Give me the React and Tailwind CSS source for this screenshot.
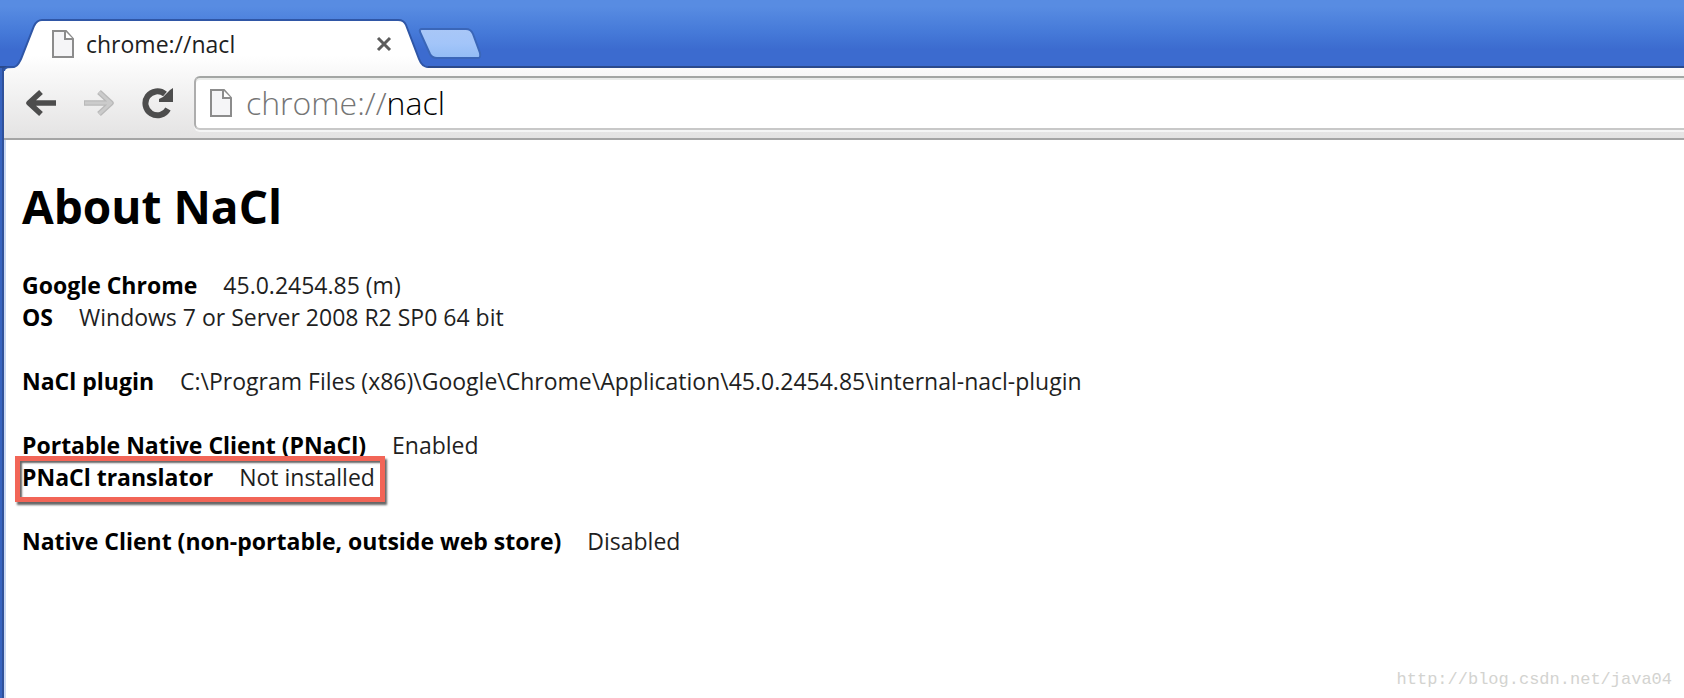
import React from "react";

function PageIcon({ className }) {
  return (
    <svg className={className} width="22" height="30" viewBox="0 0 22 30" fill="none" aria-hidden="true">
      <path d="M1 2H14L21 10V28H1Z" fill="#f5f5f7" stroke="#8c8c8c" strokeWidth="2" />
      <path d="M13 2V10H21" fill="#fff" stroke="#8c8c8c" strokeWidth="2" />
    </svg>
  );
}

function Tab() {
  return (
    <div className="relative flex h-[52px] w-[426px] items-center pt-1 pr-[34px] pl-[52px]">
      <svg className="absolute inset-0 overflow-visible" width="426" height="52" viewBox="0 0 426 52" aria-hidden="true">
        <defs>
          <linearGradient id="tab-fill" x1="0" y1="0" x2="0" y2="1">
            <stop offset="0" stopColor="#ffffff" />
            <stop offset="0.7" stopColor="#ffffff" />
            <stop offset="1" stopColor="#f9f9f9" />
          </linearGradient>
        </defs>
        <path
          d="M4 54V55C4 51 8 51 14 51C18 50 19 47 21 43L34 10Q37 4 42 4H398Q404 4 406 9L419 43Q422 51 428 52V54Z"
          fill="url(#tab-fill)"
        />
        <path
          d="M4 55C4 51 8 51 14 51C18 50 19 47 21 43L34 10Q37 4 42 4H398Q404 4 406 9L419 43Q422 51 428 51"
          fill="none"
          stroke="#2f56a6"
          strokeWidth="2"
        />
      </svg>
      <PageIcon className="relative shrink-0" />
      <span className="relative ml-3 flex-1 text-[23px] leading-8 text-[#1f1f1f]">chrome://nacl</span>
      <button type="button" aria-label="Close tab" className="relative flex size-4 items-center justify-center">
        <svg width="16" height="16" viewBox="0 0 16 16" fill="none" aria-hidden="true">
          <path d="M2 2L14 14M14 2L2 14" stroke="#5c5c5c" strokeWidth="3" />
        </svg>
      </button>
    </div>
  );
}

function TabStrip() {
  return (
    <header className="flex h-[68px] items-end border-b-2 border-[#2b4a8c] bg-linear-to-b from-[#588ce2] from-10% via-[#4579d8] via-50% to-[#3c6bcf] to-75%">
      <div className="-mb-0.5">
        <Tab />
      </div>
      <button type="button" aria-label="New tab" className="mb-1.5 -ml-2">
        <svg width="64" height="32" viewBox="0 0 64 32" aria-hidden="true">
          <defs>
            <linearGradient id="new-tab-fill" x1="0" y1="0" x2="0" y2="1">
              <stop offset="0" stopColor="#a9c7f7" />
              <stop offset="0.5" stopColor="#a3c5f9" />
              <stop offset="1" stopColor="#92bcf5" />
            </linearGradient>
          </defs>
          <path
            d="M4 1H48Q53 1 55 6L62 25Q63 30 60 30H19Q14 30 12 26L2 4Q1 1 4 1Z"
            fill="url(#new-tab-fill)"
            stroke="#3a66b8"
            strokeWidth="2"
          />
        </svg>
      </button>
    </header>
  );
}

function Toolbar() {
  return (
    <div className="flex h-[72px] items-start border-b-2 border-[#a5a5a5] bg-linear-to-b from-[#fafafa] to-[#e4e3e3] pl-5">
      <button type="button" aria-label="Back" className="mt-5 size-8">
        <svg width="32" height="32" viewBox="0 0 32 32" fill="none" aria-hidden="true">
          <path d="M17 4L5 15L17 26M5 15H32" stroke="#4d4d4d" strokeWidth="5.5" strokeLinejoin="round" />
        </svg>
      </button>
      <button type="button" aria-label="Forward" disabled className="mt-5 ml-7 size-8">
        <svg width="32" height="32" viewBox="0 0 32 32" fill="none" aria-hidden="true">
          <path d="M15 4L27 15L15 26M27 15H0" stroke="#b9b9b9" strokeWidth="5.5" strokeLinejoin="round" />
          <path d="M15 4L27 15L15 26M27 15H1" stroke="#cbcbcb" strokeWidth="3" strokeLinejoin="round" />
        </svg>
      </button>
      <button type="button" aria-label="Reload" className="mt-5 ml-[26px] size-8">
        <svg width="32" height="32" viewBox="0 0 32 32" fill="none" aria-hidden="true">
          <path d="M26 21A12 12 0 1 1 23 6" stroke="#4d4d4d" strokeWidth="6" />
          <path d="M31 0V14H17V11L21 9L28 2Z" fill="#4d4d4d" />
        </svg>
      </button>
      <div className="mt-2 ml-5 flex h-[54px] flex-1 items-center rounded-l-md border-2 border-r-0 border-t-[#a3a6a4] border-b-[#c8c8c8] border-l-[#adadad] bg-white pl-3.5 text-[32px] leading-10 font-light shadow-[inset_0_2px_0_#e9ebe9,0_2px_0_#f5f5f5]">
        <PageIcon className="shrink-0" />
        <label htmlFor="address" className="ml-3.5 text-[#757575]">
          chrome://
        </label>
        <input id="address" type="text" defaultValue="nacl" className="h-10 min-w-0 flex-1 bg-transparent text-black outline-none" />
      </div>
    </div>
  );
}

function Entry({ name, value }) {
  return (
    <div className="flex gap-[26px]">
      <dt className="font-bold text-black">{name}</dt>
      <dd>{value}</dd>
    </div>
  );
}

export default function App() {
  return (
    <div className="relative flex min-h-screen flex-col overflow-hidden bg-white font-['Open_Sans','Noto_Sans',sans-serif]">
      <TabStrip />
      <div className="flex flex-1 border-l-2 border-[#3763bf]">
        <div className="flex min-w-0 flex-1 flex-col border-l-2 border-[#2f519b]">
          <Toolbar />
          <main className="flex-1 border-l-2 border-[#c9d8f3] pt-[34px] pl-4 text-[#1f1f1f]">
            <h1 className="text-[46px] leading-[64px] font-bold text-black">About NaCl</h1>
            <dl className="mt-[31px] flex flex-col text-[23px] leading-8">
              <Entry name="Google Chrome" value="45.0.2454.85 (m)" />
              <Entry name="OS" value="Windows 7 or Server 2008 R2 SP0 64 bit" />
              <div className="mt-8">
                <Entry name="NaCl plugin" value="C:\Program Files (x86)\Google\Chrome\Application\45.0.2454.85\internal-nacl-plugin" />
              </div>
              <div className="mt-8">
                <Entry name="Portable Native Client (PNaCl)" value="Enabled" />
                <div className="relative">
                  <Entry name="PNaCl translator" value="Not installed" />
                  <div className="absolute -top-[5px] -left-[7px] h-[46px] w-[370px] border-[5px] border-[#f26557] shadow-[2px_3px_2px_#666,inset_2px_2px_2px_#666]" />
                </div>
              </div>
              <div className="mt-8">
                <Entry name="Native Client (non-portable, outside web store)" value="Disabled" />
              </div>
            </dl>
          </main>
        </div>
      </div>
      <p className="absolute right-3 bottom-1.5 font-['Liberation_Mono',monospace] text-[17px] leading-6 text-[#d3d3d0]">http://blog.csdn.net/java04</p>
    </div>
  );
}
